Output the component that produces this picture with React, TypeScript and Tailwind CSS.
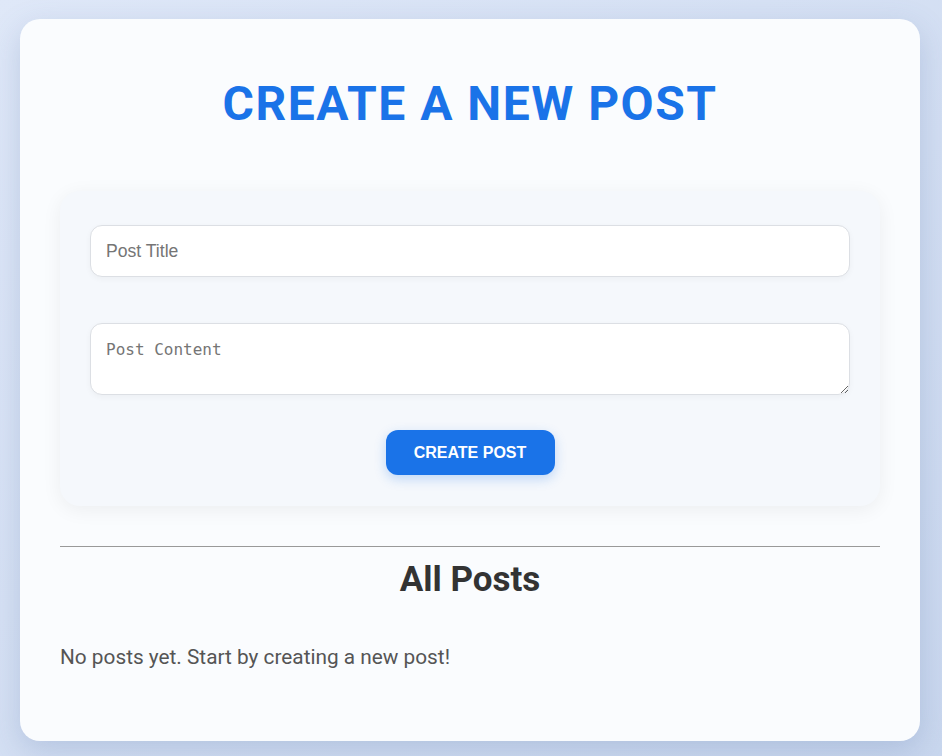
export default function App() {
  return (
    <div className="min-h-screen bg-gradient-to-br from-[#dfe8f8] to-[#c9d7ee] pl-5 pt-[19px] pb-[15px]" style={{ fontFamily: "Roboto, sans-serif" }}>
      <div className="w-[900px] h-[722px] rounded-[20px] bg-[#fafcfe] px-10 shadow-[0_10px_30px_rgba(90,120,170,0.25)]">
        <h1 className="pt-[57px] text-center text-[48px] leading-[56px] font-bold tracking-[1.5px] text-[#1a73e8]">
          CREATE A NEW POST
        </h1>

        <form className="mt-[59px] rounded-[20px] bg-[#f5f8fc] px-[30px] pt-[34px] pb-[31px] shadow-[0_4px_20px_rgba(0,0,0,0.06)]">
          <input
            type="text"
            placeholder="Post Title"
            className="block h-[52px] w-full rounded-xl border border-[#dcdfe4] bg-white px-[15px] text-[17.6px] text-[#333] placeholder:text-[#757575] shadow-[0_2px_6px_rgba(0,0,0,0.04)] outline-none"
            style={{ fontFamily: '"Liberation Sans", Arial, sans-serif' }}
          />
          <textarea
            placeholder="Post Content"
            className="mt-[46px] block h-[72px] w-full rounded-xl border border-[#dcdfe4] bg-white px-[15px] py-[14px] text-base text-[#333] placeholder:text-[#757575] shadow-[0_2px_6px_rgba(0,0,0,0.04)] outline-none"
            style={{ fontFamily: '"DejaVu Sans Mono", monospace' }}
          />
          <div className="mt-[35px] flex justify-center">
            <button
              type="button"
              className="h-[45px] w-[169px] rounded-xl bg-[#1a73e8] text-base font-bold text-white shadow-[0_4px_12px_rgba(26,115,232,0.25)]"
              style={{ fontFamily: '"Liberation Sans", Arial, sans-serif' }}
            >
              CREATE POST
            </button>
          </div>
        </form>

        <hr className="mt-10 border-t border-[#999]" />
        <h2 className="mt-[12px] text-center text-[35px] leading-[42px] font-bold text-[#333]">All Posts</h2>
        <p className="mt-[41px] text-[20.8px] text-[#555]">No posts yet. Start by creating a new post!</p>
      </div>
    </div>
  );
}
